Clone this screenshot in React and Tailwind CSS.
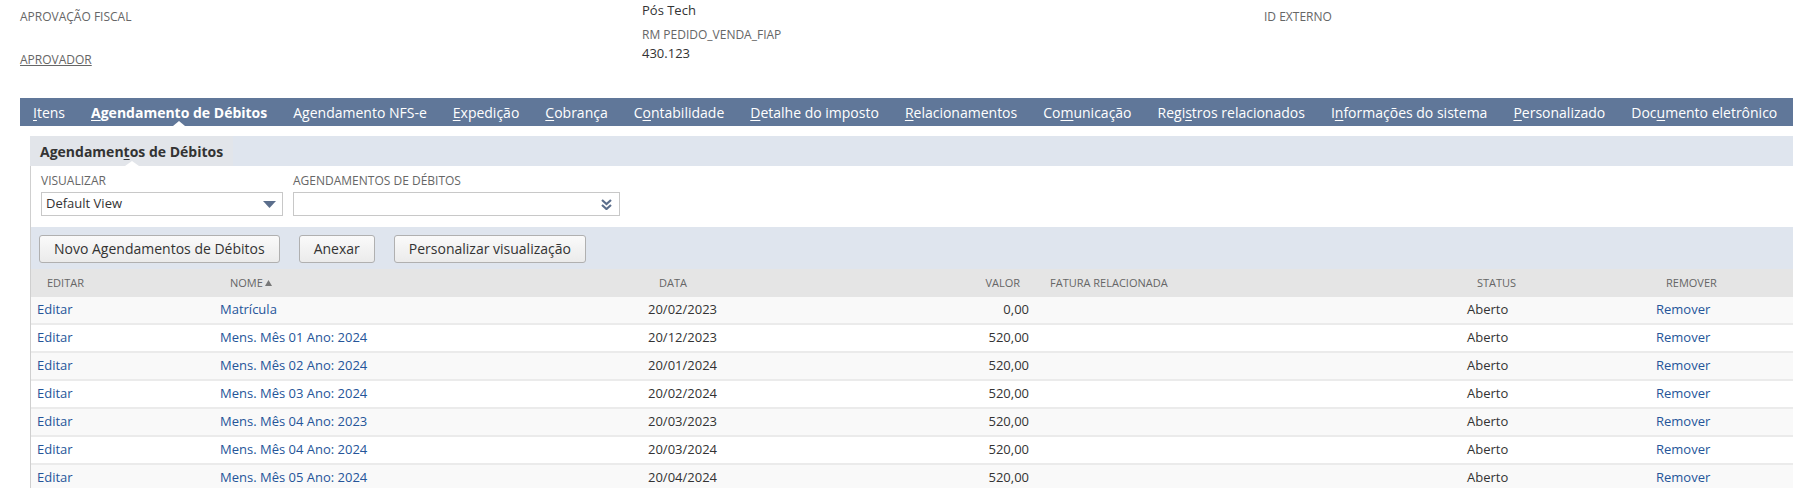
import React from "react";

const tabs = [
  { pre: "", u: "I", post: "tens" },
  { pre: "", u: "A", post: "gendamento de Débitos", active: true },
  { pre: "Agendamento NFS-e", u: "", post: "" },
  { pre: "", u: "E", post: "xpedição" },
  { pre: "", u: "C", post: "obrança" },
  { pre: "C", u: "o", post: "ntabilidade" },
  { pre: "", u: "D", post: "etalhe do imposto" },
  { pre: "", u: "R", post: "elacionamentos" },
  { pre: "Co", u: "m", post: "unicação" },
  { pre: "Regi", u: "s", post: "tros relacionados" },
  { pre: "I", u: "n", post: "formações do sistema" },
  { pre: "", u: "P", post: "ersonalizado" },
  { pre: "Doc", u: "u", post: "mento eletrônico" },
];

const rows = [
  ["Matrícula", "20/02/2023", "0,00"],
  ["Mens. Mês 01 Ano: 2024", "20/12/2023", "520,00"],
  ["Mens. Mês 02 Ano: 2024", "20/01/2024", "520,00"],
  ["Mens. Mês 03 Ano: 2024", "20/02/2024", "520,00"],
  ["Mens. Mês 04 Ano: 2023", "20/03/2023", "520,00"],
  ["Mens. Mês 04 Ano: 2024", "20/03/2024", "520,00"],
  ["Mens. Mês 05 Ano: 2024", "20/04/2024", "520,00"],
];

const cols = "grid grid-cols-[183px_428px_208px_185px_426px_189px_1fr]";

function Btn({ children }) {
  return (
    <button className="h-[28px] px-[14px] rounded-[3px] border border-[#b0b0b0] bg-gradient-to-b from-[#fafafa] to-[#ebebeb] text-[14px] text-[#333] leading-[26px]">
      {children}
    </button>
  );
}

export default function App() {
  return (
    <div className="w-[1793px] h-[488px] overflow-hidden bg-white font-['Open_Sans',sans-serif] text-[#333]">
      {/* top fields */}
      <div className="h-[98px] pl-[20px] grid grid-cols-[622px_622px_1fr]">
        <div className="pt-[9px]">
          <div className="text-[12px] leading-[16px] text-[#666] uppercase">APROVAÇÃO FISCAL</div>
          <div className="mt-[27px] text-[12px] leading-[16px] text-[#666] uppercase underline">APROVADOR</div>
        </div>
        <div className="pt-[1px]">
          <div className="text-[13px] leading-[18px]">Pós Tech</div>
          <div className="mt-[8px] text-[12px] leading-[16px] text-[#666]">RM PEDIDO_VENDA_FIAP</div>
          <div className="mt-[1px] text-[13px] leading-[18px]">430.123</div>
        </div>
        <div className="pt-[9px]">
          <div className="text-[12px] leading-[16px] text-[#666] uppercase">ID EXTERNO</div>
        </div>
      </div>

      {/* main tabs */}
      <div className="ml-[20px] h-[28px] bg-[#607799] flex items-center">
        {tabs.map((t, i) => (
          <div
            key={i}
            className={`relative h-full flex items-center px-[13px] text-[14px] text-white whitespace-nowrap ${t.active ? "font-bold" : ""}`}
          >
            <span>
              {t.pre}
              {t.u && <span className="underline underline-offset-2">{t.u}</span>}
              {t.post}
            </span>
            {t.active && (
              <span className="absolute bottom-0 left-1/2 -translate-x-1/2 w-0 h-0 border-l-[6px] border-r-[6px] border-b-[5px] border-l-transparent border-r-transparent border-b-white" />
            )}
          </div>
        ))}
      </div>

      {/* subtab bar */}
      <div className="mt-[10px] ml-[30px] h-[30px] bg-[#dfe5ee] flex">
        <div className="relative h-full bg-[#e2e5ea] px-[10px] flex items-center text-[14px] font-bold text-[#333]">
          <span>
            Agendamen<span className="underline underline-offset-2">t</span>os de Débitos
          </span>
          <span className="absolute bottom-0 left-1/2 -translate-x-1/2 w-0 h-0 border-l-[7px] border-r-[7px] border-b-[5px] border-l-transparent border-r-transparent border-b-white" />
        </div>
      </div>

      {/* content with left border */}
      <div className="ml-[30px] border-l border-[#cfcfcf]">
        {/* fields */}
        <div className="h-[61px] flex pl-[10px] pt-[7px]">
          <div className="w-[252px]">
            <div className="text-[12px] leading-[16px] text-[#666] uppercase">VISUALIZAR</div>
            <div className="mt-[3px] w-[242px] h-[24px] border border-[#c8c8c8] flex items-center justify-between pl-[4px] pr-[6px]">
              <span className="text-[13px] text-[#333]">Default View</span>
              <svg width="13" height="7" viewBox="0 0 13 7">
                <path d="M0 0 L13 0 L6.5 7 Z" fill="#5b6e8c" />
              </svg>
            </div>
          </div>
          <div>
            <div className="text-[12px] leading-[16px] text-[#666] uppercase">AGENDAMENTOS DE DÉBITOS</div>
            <div className="mt-[3px] w-[327px] h-[24px] border border-[#c8c8c8] flex items-center justify-end pr-[7px]">
              <svg width="11" height="11" viewBox="0 0 11 11">
                <path d="M1 1 L5.5 5 L10 1" fill="none" stroke="#5b6e8c" strokeWidth="2.2" />
                <path d="M1 6 L5.5 10 L10 6" fill="none" stroke="#5b6e8c" strokeWidth="2.2" />
              </svg>
            </div>
          </div>
        </div>

        {/* button bar */}
        <div className="h-[42px] bg-[#dfe5ee] flex items-center gap-[19px] pl-[8px] pt-[1px]">
          <Btn>Novo Agendamentos de Débitos</Btn>
          <Btn>Anexar</Btn>
          <Btn>Personalizar visualização</Btn>
        </div>

        {/* table header */}
        <div className={`${cols} h-[28px] bg-[#e5e5e5] items-center text-[11px] text-[#666] uppercase`}>
          <div className="pl-[16px]">EDITAR</div>
          <div className="pl-[16px] flex items-center gap-[2px]">
            NOME
            <svg width="7" height="6" viewBox="0 0 7 6">
              <path d="M0 6 L3.5 0 L7 6 Z" fill="#777" />
            </svg>
          </div>
          <div className="pl-[17px]">DATA</div>
          <div className="pr-[15px] text-right">VALOR</div>
          <div className="pl-[15px]">FATURA RELACIONADA</div>
          <div className="pl-[16px]">STATUS</div>
          <div className="pl-[16px]">REMOVER</div>
        </div>

        {/* rows */}
        {rows.map((r, i) => (
          <div
            key={i}
            className={`${cols} h-[28px] items-center border-b-2 border-[#ebebeb] text-[13px] ${i % 2 === 0 ? "bg-[#f9f9f9]" : "bg-white"}`}
          >
            <div className="pl-[6px] text-[#255599]">Editar</div>
            <div className="pl-[6px] text-[#255599]">{r[0]}</div>
            <div className="pl-[6px] text-[#333]">{r[1]}</div>
            <div className="pr-[6px] text-right text-[#333]">{r[2]}</div>
            <div />
            <div className="pl-[6px] text-[#333]">Aberto</div>
            <div className="pl-[6px] text-[#255599]">Remover</div>
          </div>
        ))}
      </div>
    </div>
  );
}
